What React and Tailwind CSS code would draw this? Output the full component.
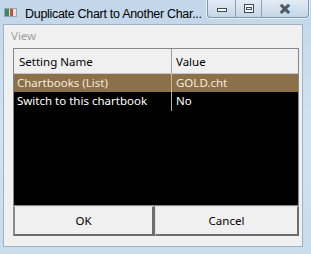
export default function App() {
  const font = { fontFamily: '"Noto Sans", "Open Sans", sans-serif' };
  return (
    <div className="w-[311px] h-[254px] overflow-hidden bg-gradient-to-b from-[#c2d6ea] via-[#d3e2ef] to-[#c9dcec] flex flex-col" style={font}>
      {/* title bar */}
      <div className="h-[24px] flex items-start shrink-0">
        <div className="shrink-0 mt-[8px] ml-[4px] w-[13px] h-[9px] border border-[#9aa6ae] bg-[#dfe6ea] flex">
          <div className="w-[4px] h-full bg-[#3e8a5e]" />
          <div className="w-[3px] h-full bg-[#d04a3a] ml-[1px]" />
        </div>
        <div className="shrink-0 ml-[8px] mt-[6px] text-[12.5px] leading-[16px] tracking-[-0.3px] text-black whitespace-nowrap" style={{ fontFamily: '"Liberation Sans", Arial, sans-serif' }}>Duplicate Chart to Another Char...</div>
        <div className="shrink-0 ml-auto mr-[2px] flex h-[18px] rounded-b-[4px] border border-t-0 border-[#7f97ae] bg-gradient-to-b from-[#e3ecf5] to-[#c5d6e6] shadow-[0_0_0_1px_rgba(255,255,255,0.6)]">
          <div className="w-[28px] flex items-center justify-center border-r border-[#8da2b6]">
            <div className="w-[10px] h-[4px] border border-[#3c4c5e] bg-white mt-[3px]" />
          </div>
          <div className="w-[26px] flex items-center justify-center border-r border-[#8da2b6]">
            <div className="w-[10px] h-[9px] border border-[#3c4c5e] bg-white flex items-start justify-center pt-[2px]">
              <div className="w-[6px] h-[3px] border border-[#3c4c5e]" />
            </div>
          </div>
          <div className="w-[46px] flex items-center justify-center">
            <span className="text-[14px] leading-[14px] font-bold text-white" style={{ WebkitTextStroke: '1px #4a5a6a' }}>✕</span>
          </div>
        </div>
      </div>
      {/* client */}
      <div className="ml-[3px] w-[300px] h-[223px] bg-[#f0f0f0] border border-[#9eb3c6] flex flex-col">
        <div className="h-[23px] pl-[7px] pt-[3px] text-[11.5px] leading-[16px] text-[#a0a0a0]">View</div>
        <div className="ml-[9px] w-[286px] h-[158px] border border-[#828790] bg-black flex flex-col text-[11.5px] leading-[16px]">
          <div className="h-[25px] bg-[#f0f0f0] flex border-b border-[#c8c8c8]">
            <div className="w-[158px] pl-[5px] pt-[5px] border-r border-[#a0a0a0] text-black">Setting Name</div>
            <div className="pl-[4px] pt-[5px] text-black">Value</div>
          </div>
          <div className="h-[18px] bg-[#8b7049] flex text-[#f4ecdd]">
            <div className="w-[158px] pl-[3px] pt-[1px] border-r border-[#c8b89c]">Chartbooks (List)</div>
            <div className="pl-[4px] pt-[1px]">GOLD.cht</div>
          </div>
          <div className="h-[19px] bg-black flex text-white">
            <div className="w-[158px] pl-[3px] pt-[1px] border-r border-[#b0b0b0]">Switch to this chartbook</div>
            <div className="pl-[4px] pt-[1px]">No</div>
          </div>
        </div>
        <div className="ml-[9px] w-[286px] h-[30px] flex text-[11.5px] text-black">
          <div className="w-[142px] h-full bg-[#f0f0f0] border-l-[2px] border-t border-r-[3px] border-b-[2px] border-l-[#8a8a8a] border-t-[#e0e0e0] border-r-[#6e6e6e] border-b-[#6e6e6e] flex items-center justify-center">OK</div>
          <div className="w-[144px] h-full bg-[#f0f0f0] border-l border-t border-r-[2px] border-b-[2px] border-l-[#e0e0e0] border-t-[#e0e0e0] border-r-[#6e6e6e] border-b-[#6e6e6e] flex items-center justify-center">Cancel</div>
        </div>
      </div>
    </div>
  );
}
